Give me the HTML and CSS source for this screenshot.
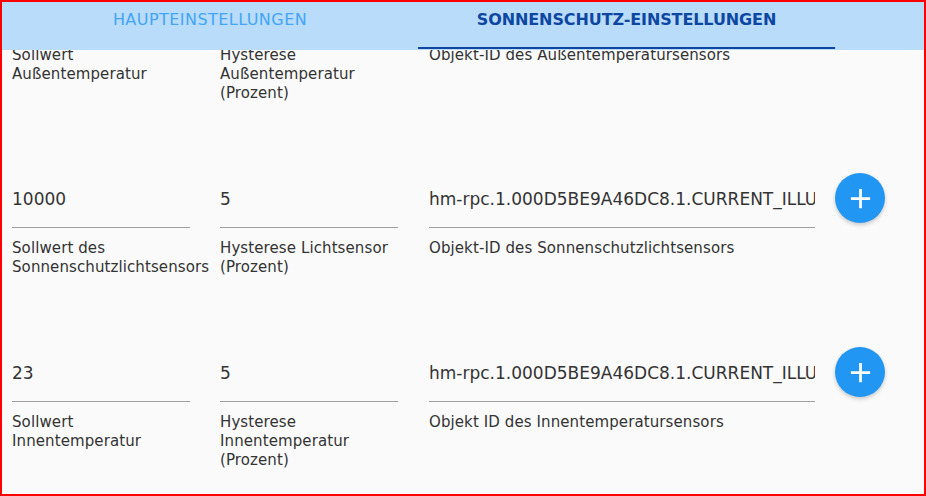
FILE: index.html
```html
<!DOCTYPE html>
<html lang="de">
<head>
    <meta charset="UTF-8">
    <title>Sonnenschutz-Einstellungen</title>
    <link rel="stylesheet" href="styles.css">
</head>
<body>
    <div class="frame">
        <div class="tabs">
            <div class="tab">HAUPTEINSTELLUNGEN</div>
            <div class="tab active">SONNENSCHUTZ-EINSTELLUNGEN</div>
        </div>
        <div class="content">
            <div class="rows">
                <div class="row">
                    <div class="field small"><div class="value">25</div><div class="label">Sollwert Außentemperatur</div></div>
                    <div class="field small"><div class="value">5</div><div class="label">Hysterese Außentemperatur (Prozent)</div></div>
                    <div class="field wide"><div class="value">hm-rpc.1.000D5BE9A46DC8.1.ACTUAL_TEMPERATURE</div><div class="label">Objekt-ID des Außentemperatursensors</div></div>
                    <button class="fab"><svg width="33" height="33" viewBox="0 0 24 24"><path d="M19 13h-6v6h-2v-6H5v-2h6V5h2v6h6v2z" fill="#fff"/></svg></button>
                </div>
                <div class="row">
                    <div class="field small"><div class="value">10000</div><div class="label">Sollwert des Sonnenschutzlichtsensors</div></div>
                    <div class="field small"><div class="value">5</div><div class="label">Hysterese Lichtsensor (Prozent)</div></div>
                    <div class="field wide"><div class="value">hm-rpc.1.000D5BE9A46DC8.1.CURRENT_ILLUMINATION</div><div class="label">Objekt-ID des Sonnenschutzlichtsensors</div></div>
                    <button class="fab"><svg width="33" height="33" viewBox="0 0 24 24"><path d="M19 13h-6v6h-2v-6H5v-2h6V5h2v6h6v2z" fill="#fff"/></svg></button>
                </div>
                <div class="row">
                    <div class="field small"><div class="value">23</div><div class="label">Sollwert Innentemperatur</div></div>
                    <div class="field small"><div class="value">5</div><div class="label">Hysterese Innentemperatur (Prozent)</div></div>
                    <div class="field wide"><div class="value">hm-rpc.1.000D5BE9A46DC8.1.CURRENT_ILLUMINATION</div><div class="label">Objekt ID des Innentemperatursensors</div></div>
                    <button class="fab"><svg width="33" height="33" viewBox="0 0 24 24"><path d="M19 13h-6v6h-2v-6H5v-2h6V5h2v6h6v2z" fill="#fff"/></svg></button>
                </div>
            </div>
        </div>
    </div>
</body>
</html>
```

FILE: styles.css
```css
html, body {
    margin: 0;
    padding: 0;
    height: 100%;
}

body {
    font-family: "DejaVu Sans", "Open Sans", sans-serif;
    background-color: #fafafa;
    color: #333;
}

.frame {
    box-sizing: border-box;
    height: 496px;
    border: 2px solid #f00;
    display: flex;
    flex-direction: column;
    overflow: hidden;
}

.tabs {
    display: flex;
    flex: none;
    height: 48px;
    background-color: #b9dcfa;
    position: relative;
    z-index: 1;
}

.tab {
    box-sizing: border-box;
    width: 416px;
    padding-top: 8px;
    text-align: center;
    font-size: 16px;
    line-height: 20px;
    letter-spacing: 0.45px;
    color: #42a5f5;
}

.tab.active {
    width: 417px;
    font-weight: 600;
    letter-spacing: -0.1px;
    color: #0d47a1;
    border-bottom: 2px solid #0d47a1;
    height: 47px;
}

.content {
    flex: 1;
    overflow: hidden;
}

/* list is scrolled, the first row sits under the tabs */
.rows {
    margin-top: -69px;
}

.row {
    display: flex;
    align-items: flex-start;
    padding-left: 10px;
    padding-bottom: 71px;
}

.field {
    flex: none;
}

.field.small {
    width: 178px;
    margin-right: 30px;
}

.field.small + .field.small {
    margin-right: 31px;
}

.field.wide {
    width: 386px;
    margin-right: 20px;
}

.value {
    height: 54px;
    padding-top: 13px;
    box-sizing: border-box;
    border-bottom: 1px solid #9e9e9e;
    font-size: 17px;
    line-height: 24px;
    white-space: nowrap;
    overflow: hidden;
}

.label {
    margin-top: 11px;
    font-size: 15px;
    line-height: 19px;
    letter-spacing: 0.1px;
}

.fab {
    flex: none;
    width: 50px;
    height: 50px;
    margin-top: -1px;
    padding: 0;
    border: none;
    border-radius: 50%;
    background-color: #2196f3;
    box-shadow: 0 2px 4px rgba(0, 0, 0, 0.2);
    display: flex;
    align-items: center;
    justify-content: center;
}
```
